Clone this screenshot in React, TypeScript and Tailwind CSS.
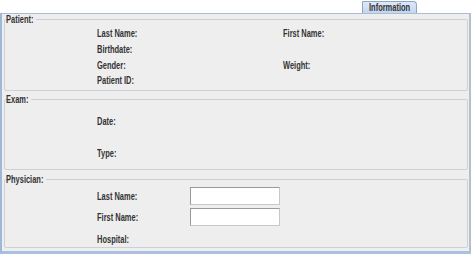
import React from "react";

const F = { fontFamily: '"Liberation Sans", Arial, sans-serif' };

function Label({ children, w }: { children: React.ReactNode; w?: number }) {
  return (
    <span className="flex h-[13px] items-center overflow-visible" style={w ? { width: w } : undefined}>
      <span className="block origin-left scale-x-[0.68] text-[11px] font-bold text-[#333333] leading-[13px] whitespace-nowrap">
        {children}
      </span>
    </span>
  );
}

function Section({ title, tw, className, children }: { title: string; tw: number; className?: string; children: React.ReactNode }) {
  return (
    <fieldset className={"border border-[#cdd0d4] rounded-[2px] ml-[2px] mr-[1px] pl-0 pr-0 pb-0 " + (className || "")}>
      <legend className="ml-[1px] pr-[2px] leading-[13px]">
        <Label w={tw}>{title}</Label>
      </legend>
      {children}
    </fieldset>
  );
}

export default function App() {
  return (
    <div style={F} className="w-[473px] h-[254px] bg-white flex flex-col overflow-hidden">
      <div className="h-[13px] flex justify-end pr-[56px]">
        <div className="mt-[1px] w-[55px] h-[12px] bg-gradient-to-b from-[#dde9f8] to-[#c3d6ef] border border-b-0 border-[#8fa5c2] rounded-tr-[4px] rounded-tl-[1px] flex items-center justify-center">
          <Label w={41}>Information</Label>
        </div>
      </div>
      <div className="h-[241px] w-[471px] flex flex-col bg-[#eeeeee] border-l-2 border-l-[#9fb8d9] border-t border-t-[#a9bdd8] border-r-2 border-r-[#b4bfcc] border-b-[3px] border-b-[#a9c0de]">
        <Section title="Patient:" tw={28} className="h-[78px] mt-[-1px]">
          <div className="grid grid-cols-[186px_auto] pl-[92px] gap-y-[3px] mt-[1px]">
            <Label>Last Name:</Label>
            <Label>First Name:</Label>
            <Label>Birthdate:</Label>
            <span />
            <Label>Gender:</Label>
            <Label>Weight:</Label>
            <div className="-mt-[1px]"><Label>Patient ID:</Label></div>
            <span />
          </div>
        </Section>
        <Section title="Exam:" tw={23} className="h-[77px] mt-[2px]">
          <div className="flex flex-col pl-[92px] gap-[19px] pt-[9px]">
            <Label>Date:</Label>
            <Label>Type:</Label>
          </div>
        </Section>
        <Section title="Physician:" tw={38} className="h-[75px] mt-[3px]">
          <div className="grid grid-cols-[93px_auto] pl-[92px] items-center gap-y-[3px] pt-[1px]">
            <Label>Last Name:</Label>
            <div className="w-[90px] h-[18px] bg-white border border-[#9a9a9a] border-r-[#c8c8c8] border-b-[#c8c8c8]" />
            <Label>First Name:</Label>
            <div className="w-[90px] h-[18px] bg-white border border-[#9a9a9a] border-r-[#c8c8c8] border-b-[#c8c8c8]" />
            <div className="h-[20px] flex items-center"><Label>Hospital:</Label></div>
            <span />
          </div>
        </Section>
      </div>
    </div>
  );
}
